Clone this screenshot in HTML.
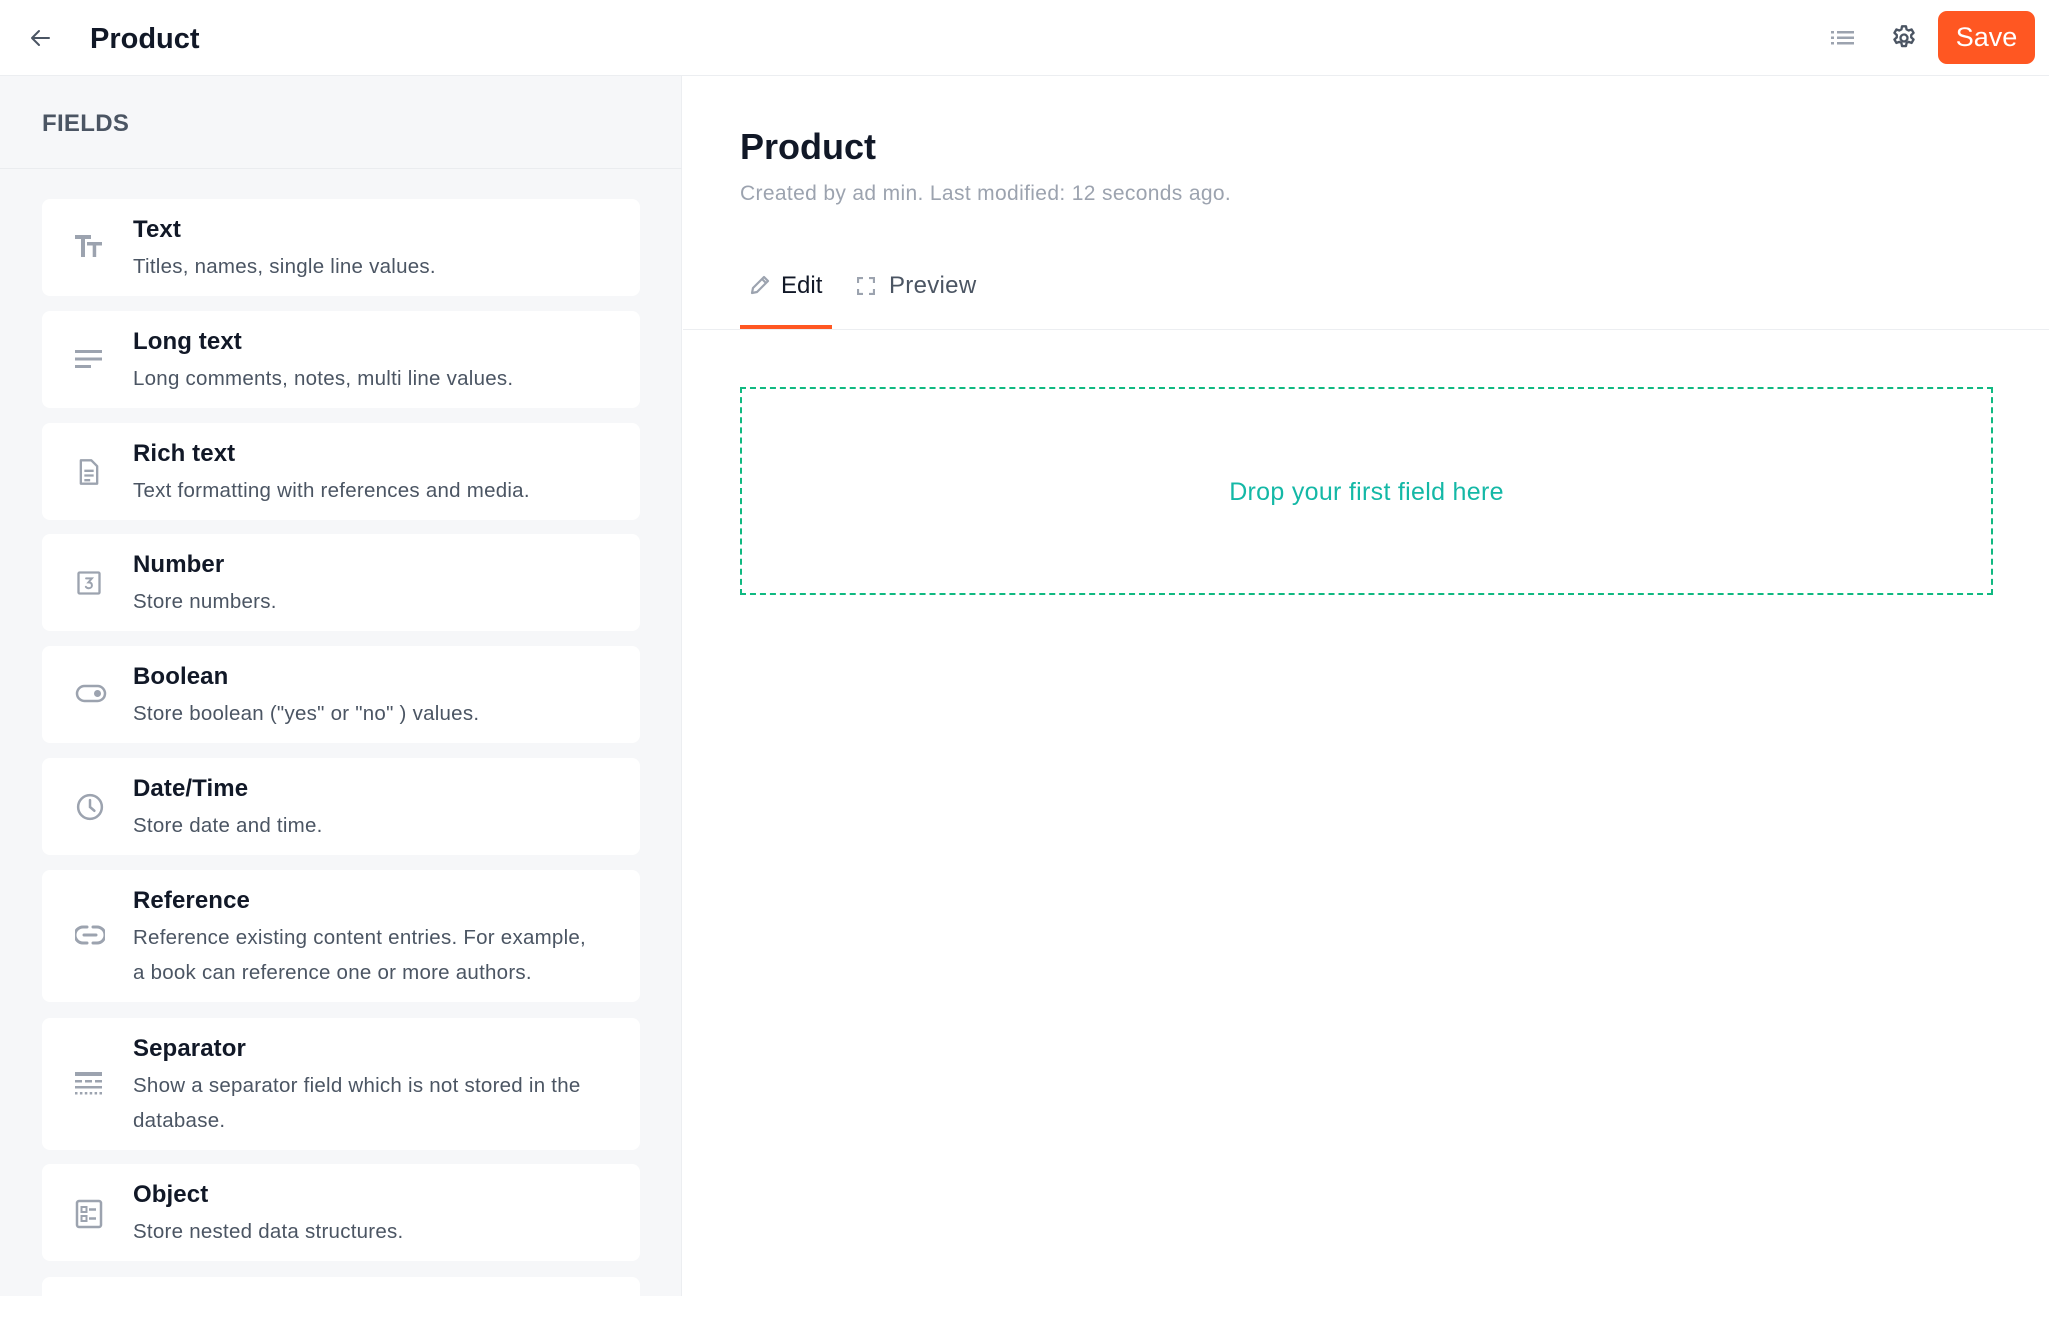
<!DOCTYPE html>
<html><head><meta charset="utf-8"><style>
*{box-sizing:border-box;margin:0;padding:0}
body{width:2049px;height:1296px;overflow:hidden;background:#fff;font-family:"Liberation Sans",sans-serif;position:relative;color:#111827}
.abs{position:absolute}
.hdr{left:0;top:0;width:2049px;height:76px;border-bottom:1px solid #eceef1;background:#fff}
.side{left:0;top:76px;width:682px;height:1220px;background:#f6f7f9;border-right:1px solid #eceef1}
.fh{left:0;top:0;width:682px;height:93px;border-bottom:1px solid #eaecef}
.card{position:absolute;left:42px;width:598px;background:#fff;border-radius:8px}
.card .t{position:absolute;left:91px;top:17px;font-size:24px;font-weight:bold;color:#111827;letter-spacing:0.1px}
.card .d{position:absolute;left:91px;top:50px;width:458px;font-size:20.5px;line-height:35px;color:#4b5563;letter-spacing:0.25px}
.card svg{position:absolute;left:33px}
</style></head><body>
<div class="abs hdr">
<svg class="abs" style="left:29px;top:26px" width="24" height="24" viewBox="0 0 24 24" fill="none" stroke="#4b5563" stroke-width="2" stroke-linecap="round" stroke-linejoin="round"><path d="M20 12H4M10 5l-7 7 7 7"/></svg>
<div class="abs" style="left:90px;top:23px;font-size:29px;font-weight:bold;color:#111827">Product</div>
<svg class="abs" style="left:1830px;top:28px" width="26" height="20" viewBox="0 0 26 20" fill="#9ca3af"><rect x="1" y="3" width="3" height="2.5"/><rect x="7" y="3" width="17" height="2.5"/><rect x="1" y="8.5" width="3" height="2.5"/><rect x="7" y="8.5" width="17" height="2.5"/><rect x="1" y="14" width="3" height="2.5"/><rect x="7" y="14" width="17" height="2.5"/></svg>
<svg class="abs" style="left:1890px;top:24px" width="28" height="28" viewBox="0 0 24 24" fill="none" stroke="#4b5563" stroke-width="2"><path d="M10.3 2h3.4l.5 2.6 1.8 1 2.5-.9 1.7 2.9-2 1.8v2.1l2 1.8-1.7 2.9-2.5-.9-1.8 1-.5 2.6h-3.4l-.5-2.6-1.8-1-2.5.9-1.7-2.9 2-1.8V9.4l-2-1.8 1.7-2.9 2.5.9 1.8-1z" stroke-linejoin="round"/><circle cx="12" cy="12" r="3"/></svg>
<div class="abs" style="left:1938px;top:11px;width:97px;height:53px;background:#ff5722;border-radius:9px;color:#fff;font-size:27px;text-align:center;line-height:53px">Save</div>
</div>
<div class="abs side">
<div class="abs fh"><div class="abs" style="left:42px;top:34px;font-size:24px;color:#4b5563;font-weight:bold;letter-spacing:0.3px">FIELDS</div></div>
</div>
<div class="card" style="top:199px;height:97px"><svg style="top:36px" width="30" height="26" viewBox="0 0 30 26" fill="#9ca3af"><rect x="0" y="0" width="16" height="4"/><rect x="6" y="0" width="4" height="22"/><rect x="12" y="7" width="15" height="3.5"/><rect x="17.7" y="7" width="3.5" height="15"/></svg><div class="t">Text</div><div class="d">Titles, names, single line values.</div></div>
<div class="card" style="top:311px;height:97px"><svg style="top:38px" width="28" height="22" viewBox="0 0 28 22" fill="#9ca3af"><rect x="0" y="1" width="27" height="3"/><rect x="0" y="8.5" width="27" height="3"/><rect x="0" y="16" width="16" height="3"/></svg><div class="t">Long text</div><div class="d">Long comments, notes, multi line values.</div></div>
<div class="card" style="top:423px;height:97px"><svg style="top:34px" width="28" height="30" viewBox="0 0 24 24" fill="none" stroke="#9ca3af" stroke-width="2"><path d="M5 2h9l5 5v15H5z M8 11h8M8 15h8M8 19h5" stroke-linejoin="round"/></svg><div class="t">Rich text</div><div class="d">Text formatting with references and media.</div></div>
<div class="card" style="top:534px;height:97px"><svg style="top:35px" width="28" height="28" viewBox="0 0 24 24" fill="none" stroke="#9ca3af" stroke-width="2"><rect x="3" y="3" width="18" height="18" rx="1"/><path d="M9.5 8h5l-3 3.5c2 0 3 1 3 2.5s-1.2 2.5-2.7 2.5c-1.2 0-2-.5-2.5-1.2" stroke-width="1.7" stroke-linecap="round"/></svg><div class="t">Number</div><div class="d">Store numbers.</div></div>
<div class="card" style="top:646px;height:97px"><svg style="top:37px" width="32" height="22" viewBox="0 0 32 22" fill="none" stroke="#9ca3af" stroke-width="2.5"><rect x="2" y="3" width="28" height="15" rx="7.5"/><circle cx="22.5" cy="10.5" r="3.5" fill="#9ca3af" stroke="none"/></svg><div class="t">Boolean</div><div class="d">Store boolean ("yes" or "no" ) values.</div></div>
<div class="card" style="top:758px;height:97px"><svg style="top:34px" width="30" height="30" viewBox="0 0 24 24" fill="none" stroke="#9ca3af" stroke-width="2" stroke-linecap="round"><circle cx="12" cy="12" r="9.5"/><path d="M12 6.5V12l3.5 3"/></svg><div class="t">Date/Time</div><div class="d">Store date and time.</div></div>
<div class="card" style="top:870px;height:132px"><svg style="top:54px" width="30" height="22" viewBox="0 0 30 22" fill="none" stroke="#9ca3af" stroke-width="3" stroke-linecap="round"><path d="M12 3H8a8 8 0 0 0 0 16h4M18 3h4a8 8 0 0 1 0 16h-4M9 11h12"/></svg><div class="t">Reference</div><div class="d">Reference existing content entries. For example, a book can reference one or more authors.</div></div>
<div class="card" style="top:1018px;height:132px"><svg style="top:54px" width="28" height="24" viewBox="0 0 28 24" fill="#9ca3af"><rect x="0" y="0" width="27" height="4"/><rect x="0" y="8" width="7" height="2.5"/><rect x="10" y="8" width="7" height="2.5"/><rect x="20" y="8" width="7" height="2.5"/><rect x="0" y="14" width="27" height="2.5" /><rect x="0" y="20" width="2.5" height="2.5"/><rect x="4.9" y="20" width="2.5" height="2.5"/><rect x="9.8" y="20" width="2.5" height="2.5"/><rect x="14.7" y="20" width="2.5" height="2.5"/><rect x="19.6" y="20" width="2.5" height="2.5"/><rect x="24.5" y="20" width="2.5" height="2.5"/></svg><div class="t">Separator</div><div class="d">Show a separator field which is not stored in the database.</div></div>
<div class="card" style="top:1164px;height:97px"><svg style="top:35px" width="28" height="30" viewBox="0 0 28 30" fill="none" stroke="#9ca3af" stroke-width="2.5"><rect x="2" y="2" width="24" height="26" rx="2"/><rect x="6.5" y="8" width="5" height="5" stroke-width="2"/><rect x="6.5" y="17" width="5" height="5" stroke-width="2"/><path d="M14 10.5h7M14 19.5h7"/></svg><div class="t">Object</div><div class="d">Store nested data structures.</div></div>
<div class="card" style="top:1277px;height:60px"></div>
<div class="abs" style="left:740px;top:126px;font-size:36px;font-weight:bold;color:#111827">Product</div>
<div class="abs" style="left:740px;top:182px;font-size:21px;color:#9ca3af;letter-spacing:0.35px">Created by ad min. Last modified: 12 seconds ago.</div>
<div class="abs" style="left:683px;top:329px;width:1366px;height:1px;background:#eceef1"></div>
<svg class="abs" style="left:748px;top:273px" width="24" height="24" viewBox="0 0 24 24" fill="none" stroke="#9ca3af" stroke-width="2.2" stroke-linejoin="round"><path d="M4 20l1-5L16 4l4 4L9 19z M14 6l4 4"/></svg>
<div class="abs" style="left:781px;top:272px;font-size:24px;color:#111827">Edit</div>
<svg class="abs" style="left:857px;top:277px" width="18" height="18" viewBox="0 0 18 18" fill="none" stroke="#9ca3af" stroke-width="2.2"><path d="M1 6V1h5M12 1h5v5M17 12v5h-5M6 17H1v-5"/></svg>
<div class="abs" style="left:889px;top:272px;font-size:24px;color:#4b5563;letter-spacing:0.3px">Preview</div>
<div class="abs" style="left:740px;top:325px;width:92px;height:4px;background:#ff5722"></div>
<div class="abs" style="left:740px;top:387px;width:1253px;height:208px;border:2.5px dashed #10b981"></div>
<div class="abs" style="left:740px;top:478px;width:1253px;text-align:center;font-size:25px;color:#14b8a6;letter-spacing:0.3px">Drop your first field here</div>
</body></html>
